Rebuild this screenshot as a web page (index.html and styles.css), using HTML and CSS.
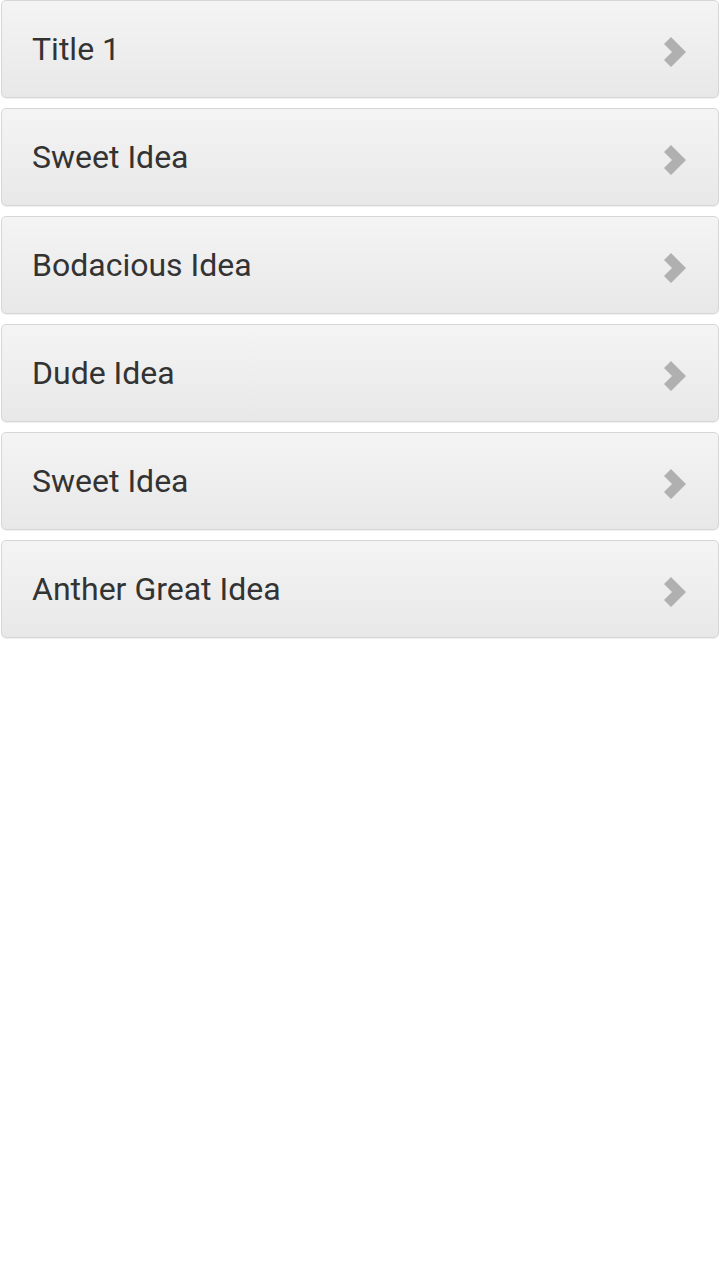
FILE: index.html
```html
<!DOCTYPE html>
<html lang="en">
<head>
  <meta charset="UTF-8">
  <title>Ideas</title>
  <link rel="stylesheet" href="styles.css">
</head>
<body>

<ul class="idea-list">
  <li class="idea-item"><span class="idea-title">Title 1</span><svg class="chevron" viewBox="0 0 24 30"><polygon points="1,7 8,0 23,15 8,30 1,23 9,15"/></svg></li>
  <li class="idea-item"><span class="idea-title">Sweet Idea</span><svg class="chevron" viewBox="0 0 24 30"><polygon points="1,7 8,0 23,15 8,30 1,23 9,15"/></svg></li>
  <li class="idea-item"><span class="idea-title">Bodacious Idea</span><svg class="chevron" viewBox="0 0 24 30"><polygon points="1,7 8,0 23,15 8,30 1,23 9,15"/></svg></li>
  <li class="idea-item"><span class="idea-title">Dude Idea</span><svg class="chevron" viewBox="0 0 24 30"><polygon points="1,7 8,0 23,15 8,30 1,23 9,15"/></svg></li>
  <li class="idea-item"><span class="idea-title">Sweet Idea</span><svg class="chevron" viewBox="0 0 24 30"><polygon points="1,7 8,0 23,15 8,30 1,23 9,15"/></svg></li>
  <li class="idea-item"><span class="idea-title">Anther Great Idea</span><svg class="chevron" viewBox="0 0 24 30"><polygon points="1,7 8,0 23,15 8,30 1,23 9,15"/></svg></li>
</ul>

</body>
</html>
```

FILE: styles.css
```css
body {
  margin: 0;
  background: #fff;
  font-family: Roboto, "Liberation Sans", sans-serif;
}
.idea-list {
  list-style: none;
  margin: 0;
  padding: 0 1px;
}
.idea-item {
  display: flex;
  align-items: center;
  justify-content: space-between;
  height: 96px;
  margin-bottom: 10px;
  padding: 0 31px 0 30px;
  border: 1px solid #d6d6d6;
  border-radius: 5px;
  background: linear-gradient(#f4f4f4, #e8e8e8);
  box-shadow: 0 1px 1px rgba(0,0,0,0.06);
}
.idea-title {
  font-size: 32px;
  color: #333;
}
.chevron {
  width: 24px;
  height: 30px;
  margin-top: 5px;
  fill: #b0b0b0;
}
```
